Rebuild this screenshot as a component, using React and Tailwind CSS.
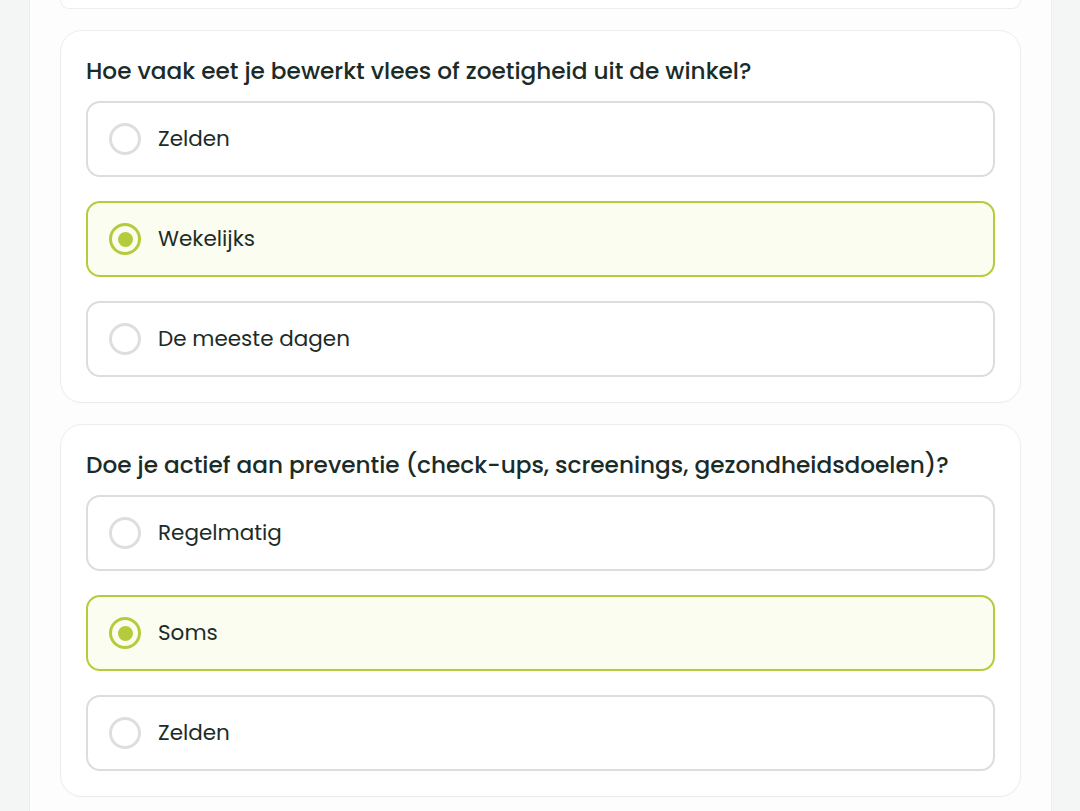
import React from "react";

const questions = [
  {
    q: "Hoe vaak eet je bewerkt vlees of zoetigheid uit de winkel?",
    options: ["Zelden", "Wekelijks", "De meeste dagen"],
    selected: 1,
  },
  {
    q: "Doe je actief aan preventie (check-ups, screenings, gezondheidsdoelen)?",
    options: ["Regelmatig", "Soms", "Zelden"],
    selected: 1,
  },
];

function Option({ label, selected }) {
  return (
    <div
      className={
        "flex h-[76px] items-center gap-[17px] rounded-[14px] border-2 pl-[21px] " +
        (selected ? "border-[#b5cb3b] bg-[#fbfdf0]" : "border-[#dadedd] bg-white")
      }
    >
      <div
        className={
          "flex h-[32px] w-[32px] shrink-0 items-center justify-center rounded-full border-[3px] " +
          (selected ? "border-[#b5cb3b]" : "border-[#dcdfde]")
        }
      >
        {selected && <div className="h-[15px] w-[15px] rounded-full bg-[#b5cb3b]" />}
      </div>
      <span className="text-[21.5px] leading-[28px] text-[#1b2c28]">{label}</span>
    </div>
  );
}

function Card({ q, options, selected }) {
  return (
    <div className="rounded-[22px] border border-[#eceeed] bg-white px-[25px] pb-[25px] pt-[26px] shadow-[0_1px_2px_rgba(0,0,0,0.02)]">
      <h2 className="mb-[16px] text-[23.2px] font-medium leading-[28px] text-[#1b2c28]">{q}</h2>
      <div className="flex flex-col gap-[24px]">
        {options.map((o, i) => (
          <Option key={i} label={o} selected={i === selected} />
        ))}
      </div>
    </div>
  );
}

export default function App() {
  return (
    <div
      className="flex min-h-[811px] w-full justify-center bg-[#f4f6f5] pl-[29px] pr-[28px]"
      style={{ fontFamily: '"Poppins", "Open Sans", "Noto Sans", sans-serif' }}
    >
      <div className="flex w-full flex-col gap-[21px] border-x border-[#eceeed] bg-[#fdfdfd] px-[30px] pb-[14px]">
        <div className="h-[9px] rounded-b-[22px] border-x border-b border-[#eceeed] bg-white" />
        {questions.map((c, i) => (
          <Card key={i} {...c} />
        ))}
      </div>
    </div>
  );
}
